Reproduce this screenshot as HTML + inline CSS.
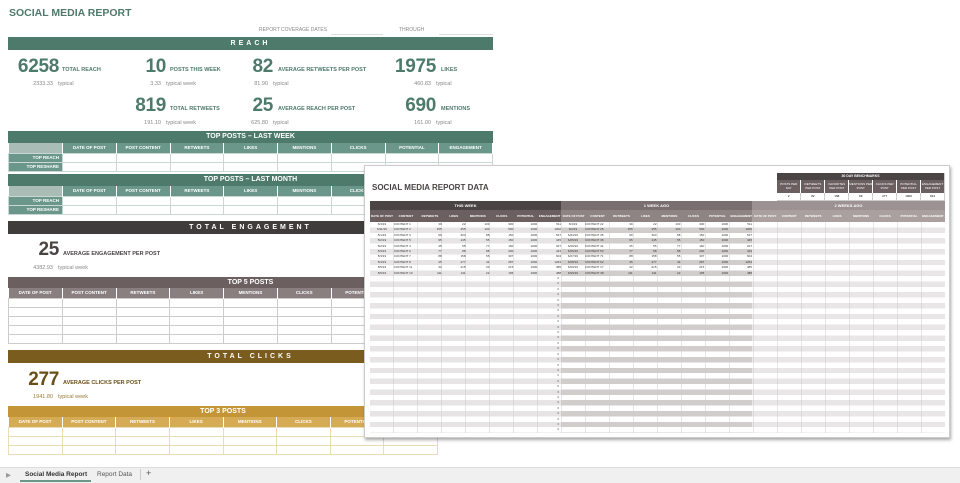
<!DOCTYPE html>
<html><head><meta charset="utf-8"><style>
*{margin:0;padding:0;box-sizing:border-box}
body{width:960px;height:483px;overflow:hidden;background:#fff;font-family:"Liberation Sans",sans-serif;position:relative}
.a{position:absolute}
.bar{position:absolute;color:#fff;font-weight:bold;text-align:center;font-size:7px;letter-spacing:3px}
.big{position:absolute;font-weight:bold;font-size:19px;letter-spacing:-0.3px;text-align:right;width:59px;line-height:22px}
.lbl{position:absolute;font-size:5.5px;font-weight:bold;line-height:8px}
.typ{position:absolute;font-size:5.5px;color:#888;line-height:7px}
.typ b{font-weight:normal;display:inline-block;text-align:right;width:50px;margin-right:5px}
table{border-collapse:collapse;table-layout:fixed;position:absolute}
td{font-size:4.5px;text-align:center;overflow:hidden;white-space:nowrap;padding:0}
.gh td{color:#fff;font-weight:bold;border-right:1px solid #fff}
.gb td{border:1px solid #c9d8d3}
.tab{position:absolute;font-size:6.5px;top:471px}
.ov td{font-size:3px;border-right:1px solid #ccc;height:5.4px;line-height:5px}
</style></head><body>
<div class="a" style="left:9px;top:7px;font-size:10.5px;font-weight:bold;color:#4e7a6c">SOCIAL MEDIA REPORT</div>
<div class="a" style="left:259px;top:27px;font-size:5px;color:#888">REPORT COVERAGE DATES</div>
<div class="a" style="left:331px;top:34px;width:52px;border-top:1px solid #ddd"></div>
<div class="a" style="left:399px;top:27px;font-size:5px;color:#888">THROUGH</div>
<div class="a" style="left:439px;top:34px;width:54px;border-top:1px solid #ddd"></div>

<div class="bar" style="left:8px;top:37px;width:485px;height:13px;line-height:13px;background:#4e7a6c">REACH</div>
<div style="color:#4e7a6c">
<div class="big" style="left:0;top:56px">6258</div><div class="lbl" style="left:62px;top:66px">TOTAL REACH</div>
<div class="big" style="left:107px;top:56px">10</div><div class="lbl" style="left:170px;top:66px">POSTS THIS WEEK</div>
<div class="big" style="left:214px;top:56px">82</div><div class="lbl" style="left:278px;top:66px">AVERAGE RETWEETS PER POST</div>
<div class="big" style="left:377px;top:56px">1975</div><div class="lbl" style="left:441px;top:66px">LIKES</div>
<div class="big" style="left:107px;top:95px">819</div><div class="lbl" style="left:170px;top:105px">TOTAL RETWEETS</div>
<div class="big" style="left:214px;top:95px">25</div><div class="lbl" style="left:278px;top:105px">AVERAGE REACH PER POST</div>
<div class="big" style="left:377px;top:95px">690</div><div class="lbl" style="left:441px;top:105px">MENTIONS</div>
</div>
<div class="typ" style="left:3px;top:81px"><b>2333.33</b>typical</div>
<div class="typ" style="left:111px;top:81px"><b>3.33</b>typical week</div>
<div class="typ" style="left:218px;top:81px"><b>81.90</b>typical</div>
<div class="typ" style="left:381px;top:81px"><b>460.83</b>typical</div>
<div class="typ" style="left:111px;top:120px"><b>191.10</b>typical week</div>
<div class="typ" style="left:218px;top:120px"><b>625.80</b>typical</div>
<div class="typ" style="left:381px;top:120px"><b>161.00</b>typical</div>

<div class="bar" style="left:8px;top:131px;width:485px;height:12px;line-height:12px;background:#4e7a6c;letter-spacing:0">TOP POSTS – LAST WEEK</div>
<table style="left:8px;top:143px;width:485px">
<tr class="gh" style="height:10px;background:#6a978a"><td style="width:54px;background:#a9bdb6"></td><td>DATE OF POST</td><td>POST CONTENT</td><td>RETWEETS</td><td>LIKES</td><td>MENTIONS</td><td>CLICKS</td><td>POTENTIAL</td><td>ENGAGEMENT</td></tr>
<tr class="gb" style="height:9px"><td style="background:#6a978a;color:#fff;font-weight:bold;text-align:right;padding-right:3px">TOP REACH</td><td></td><td></td><td></td><td></td><td></td><td></td><td></td><td></td></tr>
<tr class="gb" style="height:9px"><td style="background:#6a978a;color:#fff;font-weight:bold;text-align:right;padding-right:3px">TOP RESHARE</td><td></td><td></td><td></td><td></td><td></td><td></td><td></td><td></td></tr>
</table>
<div class="bar" style="left:8px;top:174px;width:485px;height:12px;line-height:12px;background:#4e7a6c;letter-spacing:0">TOP POSTS – LAST MONTH</div>
<table style="left:8px;top:186px;width:485px">
<tr class="gh" style="height:10px;background:#6a978a"><td style="width:54px;background:#a9bdb6"></td><td>DATE OF POST</td><td>POST CONTENT</td><td>RETWEETS</td><td>LIKES</td><td>MENTIONS</td><td>CLICKS</td><td>POTENTIAL</td><td>ENGAGEMENT</td></tr>
<tr class="gb" style="height:9px"><td style="background:#6a978a;color:#fff;font-weight:bold;text-align:right;padding-right:3px">TOP REACH</td><td></td><td></td><td></td><td></td><td></td><td></td><td></td><td></td></tr>
<tr class="gb" style="height:9px"><td style="background:#6a978a;color:#fff;font-weight:bold;text-align:right;padding-right:3px">TOP RESHARE</td><td></td><td></td><td></td><td></td><td></td><td></td><td></td><td></td></tr>
</table>

<div class="bar" style="left:8px;top:221px;width:485px;height:13px;line-height:13px;background:#403c3c">TOTAL ENGAGEMENT</div>
<div class="big" style="left:0;top:239px;color:#4a4444">25</div><div class="lbl" style="left:63px;top:250px;color:#4a4444">AVERAGE ENGAGEMENT PER POST</div>
<div class="typ" style="left:3px;top:265px"><b>4382.93</b>typical week</div>
<div class="bar" style="left:8px;top:277px;width:485px;height:11px;line-height:11px;background:#6b5f5f;letter-spacing:0">TOP 5 POSTS</div>
<table style="left:8px;top:288px;width:485px">
<tr class="gh" style="height:10px;background:#8a7f7f"><td>DATE OF POST</td><td>POST CONTENT</td><td>RETWEETS</td><td>LIKES</td><td>MENTIONS</td><td>CLICKS</td><td>POTENTIAL</td><td>ENGAGEMENT</td><td></td></tr>
<tr class="gb" style="height:9px"><td style="border-color:#ccc"></td><td style="border-color:#ccc"></td><td style="border-color:#ccc"></td><td style="border-color:#ccc"></td><td style="border-color:#ccc"></td><td style="border-color:#ccc"></td><td style="border-color:#ccc"></td><td style="border-color:#ccc"></td><td style="border-color:#ccc"></td></tr>
<tr class="gb" style="height:9px"><td style="border-color:#ccc"></td><td style="border-color:#ccc"></td><td style="border-color:#ccc"></td><td style="border-color:#ccc"></td><td style="border-color:#ccc"></td><td style="border-color:#ccc"></td><td style="border-color:#ccc"></td><td style="border-color:#ccc"></td><td style="border-color:#ccc"></td></tr>
<tr class="gb" style="height:9px"><td style="border-color:#ccc"></td><td style="border-color:#ccc"></td><td style="border-color:#ccc"></td><td style="border-color:#ccc"></td><td style="border-color:#ccc"></td><td style="border-color:#ccc"></td><td style="border-color:#ccc"></td><td style="border-color:#ccc"></td><td style="border-color:#ccc"></td></tr>
<tr class="gb" style="height:9px"><td style="border-color:#ccc"></td><td style="border-color:#ccc"></td><td style="border-color:#ccc"></td><td style="border-color:#ccc"></td><td style="border-color:#ccc"></td><td style="border-color:#ccc"></td><td style="border-color:#ccc"></td><td style="border-color:#ccc"></td><td style="border-color:#ccc"></td></tr>
<tr class="gb" style="height:9px"><td style="border-color:#ccc"></td><td style="border-color:#ccc"></td><td style="border-color:#ccc"></td><td style="border-color:#ccc"></td><td style="border-color:#ccc"></td><td style="border-color:#ccc"></td><td style="border-color:#ccc"></td><td style="border-color:#ccc"></td><td style="border-color:#ccc"></td></tr>
</table>

<div class="bar" style="left:8px;top:350px;width:485px;height:13px;line-height:13px;background:#7a5c1e">TOTAL CLICKS</div>
<div class="big" style="left:0;top:369px;color:#6b4f18">277</div><div class="lbl" style="left:63px;top:379px;color:#6b4f18">AVERAGE CLICKS PER POST</div>
<div class="typ" style="left:3px;top:394px;color:#9a7a3a"><b>1941.80</b>typical week</div>
<div class="bar" style="left:8px;top:406px;width:430px;height:11px;line-height:11px;background:#c49536;letter-spacing:0">TOP 3 POSTS</div>
<table style="left:8px;top:417px;width:430px">
<tr class="gh" style="height:10px;background:#d6ab55"><td>DATE OF POST</td><td>POST CONTENT</td><td>RETWEETS</td><td>LIKES</td><td>MENTIONS</td><td>CLICKS</td><td>POTENTIAL</td><td>ENGAGEMENT</td></tr>
<tr class="gb" style="height:9px"><td style="border-color:#ecdcb5"></td><td style="border-color:#ecdcb5"></td><td style="border-color:#ecdcb5"></td><td style="border-color:#ecdcb5"></td><td style="border-color:#ecdcb5"></td><td style="border-color:#ecdcb5"></td><td style="border-color:#ecdcb5"></td><td style="border-color:#ecdcb5"></td></tr>
<tr class="gb" style="height:9px"><td style="border-color:#ecdcb5"></td><td style="border-color:#ecdcb5"></td><td style="border-color:#ecdcb5"></td><td style="border-color:#ecdcb5"></td><td style="border-color:#ecdcb5"></td><td style="border-color:#ecdcb5"></td><td style="border-color:#ecdcb5"></td><td style="border-color:#ecdcb5"></td></tr>
<tr class="gb" style="height:9px"><td style="border-color:#ecdcb5"></td><td style="border-color:#ecdcb5"></td><td style="border-color:#ecdcb5"></td><td style="border-color:#ecdcb5"></td><td style="border-color:#ecdcb5"></td><td style="border-color:#ecdcb5"></td><td style="border-color:#ecdcb5"></td><td style="border-color:#ecdcb5"></td></tr>
</table>

<div class="a" style="left:364px;top:165px;width:586px;height:273px;background:#fff;border:1px solid #ccc;box-shadow:1px 2px 3px rgba(0,0,0,.35)"></div>
<div class="a" style="left:372px;top:183px;font-size:8px;font-weight:bold;color:#4a4444">SOCIAL MEDIA REPORT DATA</div>
<table class="ov" style="left:777px;top:173px;width:168px">
<tr style="height:7px;background:#4a4444;color:#fff"><td colspan="7" style="font-size:3.5px;font-weight:bold">30 DAY BENCHMARKS</td></tr>
<tr style="height:13px;background:#6b5f5f;color:#fff"><td style="white-space:normal;line-height:3.5px;border-right:1px solid #fff">POSTS PER DAY</td><td style="white-space:normal;line-height:3.5px;border-right:1px solid #fff">RETWEETS PER POST</td><td style="white-space:normal;line-height:3.5px;border-right:1px solid #fff">FAVORITES PER POST</td><td style="white-space:normal;line-height:3.5px;border-right:1px solid #fff">MENTIONS PER POST</td><td style="white-space:normal;line-height:3.5px;border-right:1px solid #fff">CLICKS PER POST</td><td style="white-space:normal;line-height:3.5px;border-right:1px solid #fff">POTENTIAL PER POST</td><td style="white-space:normal;line-height:3.5px">ENGAGEMENT PER POST</td></tr>
<tr style="height:7px;border-bottom:1px solid #ccc"><td>2</td><td>82</td><td>198</td><td>69</td><td>277</td><td>1000</td><td>624</td></tr>
</table>

<div class="a" style="left:370px;top:201px;width:191px;height:9px;background:#4a4444;color:#fff;font-size:4px;font-weight:bold;text-align:center;line-height:9px">THIS WEEK</div>
<div class="a" style="left:561px;top:201px;width:191px;height:9px;background:#7a6f6f;color:#fff;font-size:4px;font-weight:bold;text-align:center;line-height:9px">1 WEEK AGO</div>
<div class="a" style="left:752px;top:201px;width:193px;height:9px;background:#9c9292;color:#fff;font-size:4px;font-weight:bold;text-align:center;line-height:9px">2 WEEKS AGO</div>
<div class="a" style="left:370px;top:210px;width:191px;height:12px;background:#6b5f5f"></div>
<div class="a" style="left:561px;top:210px;width:191px;height:12px;background:#8f8484"></div>
<div class="a" style="left:752px;top:210px;width:193px;height:12px;background:#aaa0a0"></div>
<div class="a" style="left:370px;top:210px;width:575px;height:12px;display:flex;color:#fff;font-size:3px;font-weight:bold">
<span style="flex:1;text-align:center;line-height:12px">DATE OF POST</span><span style="flex:1;text-align:center;line-height:12px">CONTENT</span><span style="flex:1;text-align:center;line-height:12px">RETWEETS</span><span style="flex:1;text-align:center;line-height:12px">LIKES</span><span style="flex:1;text-align:center;line-height:12px">MENTIONS</span><span style="flex:1;text-align:center;line-height:12px">CLICKS</span><span style="flex:1;text-align:center;line-height:12px">POTENTIAL</span><span style="flex:1;text-align:center;line-height:12px">ENGAGEMENT</span>
<span style="flex:1;text-align:center;line-height:12px">DATE OF POST</span><span style="flex:1;text-align:center;line-height:12px">CONTENT</span><span style="flex:1;text-align:center;line-height:12px">RETWEETS</span><span style="flex:1;text-align:center;line-height:12px">LIKES</span><span style="flex:1;text-align:center;line-height:12px">MENTIONS</span><span style="flex:1;text-align:center;line-height:12px">CLICKS</span><span style="flex:1;text-align:center;line-height:12px">POTENTIAL</span><span style="flex:1;text-align:center;line-height:12px">ENGAGEMENT</span>
<span style="flex:1;text-align:center;line-height:12px">DATE OF POST</span><span style="flex:1;text-align:center;line-height:12px">CONTENT</span><span style="flex:1;text-align:center;line-height:12px">RETWEETS</span><span style="flex:1;text-align:center;line-height:12px">LIKES</span><span style="flex:1;text-align:center;line-height:12px">MENTIONS</span><span style="flex:1;text-align:center;line-height:12px">CLICKS</span><span style="flex:1;text-align:center;line-height:12px">POTENTIAL</span><span style="flex:1;text-align:center;line-height:12px">ENGAGEMENT</span></div>
<div class="a" style="left:370px;top:222px;width:191px;height:211px;background:repeating-linear-gradient(#fff 0 5.4px,#e6e4e4 5.4px 10.8px)"></div>
<div class="a" style="left:561px;top:222px;width:191px;height:211px;background:repeating-linear-gradient(#fff 0 5.4px,#d2cdcd 5.4px 10.8px)"></div>
<div class="a" style="left:752px;top:222px;width:193px;height:211px;background:repeating-linear-gradient(#fff 0 5.4px,#e8e6e6 5.4px 10.8px)"></div>
<div class="a" style="left:370px;top:222px;width:575px;height:211px;background:repeating-linear-gradient(90deg,transparent 0 23.5px,#ccc 23.5px 24px)"></div>
<div class="a" style="left:370px;top:222px;width:191px;font-size:3px;line-height:5.4px;color:#333">
<div style="display:flex"><span style="flex:1;text-align:center">6/3/19</span><span style="flex:1">CONTENT 1</span><span style="flex:1;text-align:right">39</span><span style="flex:1;text-align:right">22</span><span style="flex:1;text-align:right">103</span><span style="flex:1;text-align:right">300</span><span style="flex:1;text-align:right">1000</span><span style="flex:1;text-align:right">511</span></div>
<div style="display:flex"><span style="flex:1;text-align:center">6/11/19</span><span style="flex:1">CONTENT 2</span><span style="flex:1;text-align:right">155</span><span style="flex:1;text-align:right">255</span><span style="flex:1;text-align:right">100</span><span style="flex:1;text-align:right">500</span><span style="flex:1;text-align:right">1000</span><span style="flex:1;text-align:right">1000</span></div>
<div style="display:flex"><span style="flex:1;text-align:center">5/1/19</span><span style="flex:1">CONTENT 3</span><span style="flex:1;text-align:right">99</span><span style="flex:1;text-align:right">303</span><span style="flex:1;text-align:right">88</span><span style="flex:1;text-align:right">150</span><span style="flex:1;text-align:right">1000</span><span style="flex:1;text-align:right">527</span></div>
<div style="display:flex"><span style="flex:1;text-align:center">5/2/19</span><span style="flex:1">CONTENT 5</span><span style="flex:1;text-align:right">95</span><span style="flex:1;text-align:right">145</span><span style="flex:1;text-align:right">55</span><span style="flex:1;text-align:right">150</span><span style="flex:1;text-align:right">1000</span><span style="flex:1;text-align:right">445</span></div>
<div style="display:flex"><span style="flex:1;text-align:center">5/2/19</span><span style="flex:1">CONTENT 4</span><span style="flex:1;text-align:right">35</span><span style="flex:1;text-align:right">55</span><span style="flex:1;text-align:right">77</span><span style="flex:1;text-align:right">160</span><span style="flex:1;text-align:right">1000</span><span style="flex:1;text-align:right">327</span></div>
<div style="display:flex"><span style="flex:1;text-align:center">5/3/19</span><span style="flex:1">CONTENT 6</span><span style="flex:1;text-align:right">77</span><span style="flex:1;text-align:right">88</span><span style="flex:1;text-align:right">88</span><span style="flex:1;text-align:right">200</span><span style="flex:1;text-align:right">1000</span><span style="flex:1;text-align:right">443</span></div>
<div style="display:flex"><span style="flex:1;text-align:center">5/3/19</span><span style="flex:1">CONTENT 7</span><span style="flex:1;text-align:right">88</span><span style="flex:1;text-align:right">158</span><span style="flex:1;text-align:right">55</span><span style="flex:1;text-align:right">307</span><span style="flex:1;text-align:right">1000</span><span style="flex:1;text-align:right">604</span></div>
<div style="display:flex"><span style="flex:1;text-align:center">5/4/19</span><span style="flex:1">CONTENT 8</span><span style="flex:1;text-align:right">45</span><span style="flex:1;text-align:right">277</span><span style="flex:1;text-align:right">44</span><span style="flex:1;text-align:right">287</span><span style="flex:1;text-align:right">1000</span><span style="flex:1;text-align:right">1263</span></div>
<div style="display:flex"><span style="flex:1;text-align:center">5/5/19</span><span style="flex:1">CONTENT 11</span><span style="flex:1;text-align:right">32</span><span style="flex:1;text-align:right">215</span><span style="flex:1;text-align:right">33</span><span style="flex:1;text-align:right">215</span><span style="flex:1;text-align:right">1000</span><span style="flex:1;text-align:right">485</span></div>
<div style="display:flex"><span style="flex:1;text-align:center">5/6/19</span><span style="flex:1">CONTENT 10</span><span style="flex:1;text-align:right">111</span><span style="flex:1;text-align:right">211</span><span style="flex:1;text-align:right">22</span><span style="flex:1;text-align:right">195</span><span style="flex:1;text-align:right">1000</span><span style="flex:1;text-align:right">488</span></div>
</div>
<div class="a" style="left:561px;top:222px;width:191px;font-size:3px;line-height:5.4px;color:#333">
<div style="display:flex"><span style="flex:1;text-align:center">6/3/19</span><span style="flex:1">CONTENT 22</span><span style="flex:1;text-align:right">39</span><span style="flex:1;text-align:right">22</span><span style="flex:1;text-align:right">103</span><span style="flex:1;text-align:right">300</span><span style="flex:1;text-align:right">1000</span><span style="flex:1;text-align:right">511</span></div>
<div style="display:flex"><span style="flex:1;text-align:center">6/2/19</span><span style="flex:1">CONTENT 25</span><span style="flex:1;text-align:right">155</span><span style="flex:1;text-align:right">255</span><span style="flex:1;text-align:right">100</span><span style="flex:1;text-align:right">500</span><span style="flex:1;text-align:right">1000</span><span style="flex:1;text-align:right">1000</span></div>
<div style="display:flex"><span style="flex:1;text-align:center">6/24/19</span><span style="flex:1">CONTENT 35</span><span style="flex:1;text-align:right">99</span><span style="flex:1;text-align:right">303</span><span style="flex:1;text-align:right">88</span><span style="flex:1;text-align:right">150</span><span style="flex:1;text-align:right">1000</span><span style="flex:1;text-align:right">527</span></div>
<div style="display:flex"><span style="flex:1;text-align:center">6/25/19</span><span style="flex:1">CONTENT 36</span><span style="flex:1;text-align:right">95</span><span style="flex:1;text-align:right">145</span><span style="flex:1;text-align:right">55</span><span style="flex:1;text-align:right">150</span><span style="flex:1;text-align:right">1000</span><span style="flex:1;text-align:right">445</span></div>
<div style="display:flex"><span style="flex:1;text-align:center">6/26/19</span><span style="flex:1">CONTENT 41</span><span style="flex:1;text-align:right">35</span><span style="flex:1;text-align:right">55</span><span style="flex:1;text-align:right">77</span><span style="flex:1;text-align:right">160</span><span style="flex:1;text-align:right">1000</span><span style="flex:1;text-align:right">327</span></div>
<div style="display:flex"><span style="flex:1;text-align:center">6/26/19</span><span style="flex:1">CONTENT 53</span><span style="flex:1;text-align:right">77</span><span style="flex:1;text-align:right">88</span><span style="flex:1;text-align:right">88</span><span style="flex:1;text-align:right">200</span><span style="flex:1;text-align:right">1000</span><span style="flex:1;text-align:right">443</span></div>
<div style="display:flex"><span style="flex:1;text-align:center">6/27/19</span><span style="flex:1">CONTENT 71</span><span style="flex:1;text-align:right">88</span><span style="flex:1;text-align:right">158</span><span style="flex:1;text-align:right">55</span><span style="flex:1;text-align:right">307</span><span style="flex:1;text-align:right">1000</span><span style="flex:1;text-align:right">604</span></div>
<div style="display:flex"><span style="flex:1;text-align:center">6/28/19</span><span style="flex:1">CONTENT 62</span><span style="flex:1;text-align:right">45</span><span style="flex:1;text-align:right">277</span><span style="flex:1;text-align:right">44</span><span style="flex:1;text-align:right">287</span><span style="flex:1;text-align:right">1000</span><span style="flex:1;text-align:right">1263</span></div>
<div style="display:flex"><span style="flex:1;text-align:center">6/29/19</span><span style="flex:1">CONTENT 17</span><span style="flex:1;text-align:right">32</span><span style="flex:1;text-align:right">215</span><span style="flex:1;text-align:right">33</span><span style="flex:1;text-align:right">215</span><span style="flex:1;text-align:right">1000</span><span style="flex:1;text-align:right">485</span></div>
<div style="display:flex"><span style="flex:1;text-align:center">6/30/19</span><span style="flex:1">CONTENT 38</span><span style="flex:1;text-align:right">111</span><span style="flex:1;text-align:right">211</span><span style="flex:1;text-align:right">22</span><span style="flex:1;text-align:right">195</span><span style="flex:1;text-align:right">1000</span><span style="flex:1;text-align:right">488</span></div>
</div>
<div class="a" style="left:554px;top:276px;width:5px;font-size:3px;line-height:5.4px;color:#555;text-align:right">0<br>0<br>0<br>0<br>0<br>0<br>0<br>0<br>0<br>0<br>0<br>0<br>0<br>0<br>0<br>0<br>0<br>0<br>0<br>0<br>0<br>0<br>0<br>0<br>0<br>0<br>0<br>0<br>0</div>

<div class="a" style="left:0;top:467px;width:960px;height:16px;background:#f0f0f0;border-top:1px solid #ddd"></div>
<div class="tab" style="left:6px;color:#999">▶</div>
<div class="a" style="left:20px;top:468px;width:71px;height:14px;border-bottom:2px solid #6a978a"></div>
<div class="tab" style="left:25px;color:#333;font-weight:bold">Social Media Report</div>
<div class="tab" style="left:97px;color:#555">Report Data</div>
<div class="a" style="left:140px;top:469px;height:11px;border-left:1px solid #ccc"></div>
<div class="tab" style="left:146px;color:#555;font-size:9px;top:468px">+</div>
</body></html>
